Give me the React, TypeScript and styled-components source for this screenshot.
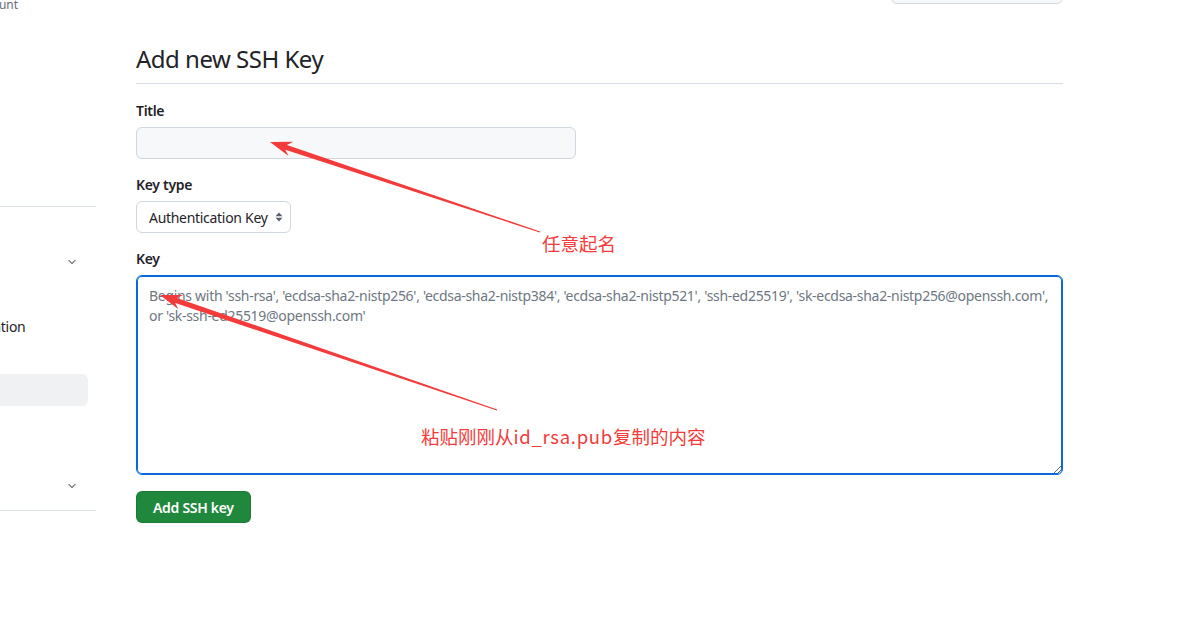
import React from "react";
import styled, { createGlobalStyle } from "styled-components";

const GlobalStyle = createGlobalStyle`
  html, body { margin: 0; padding: 0; background: #ffffff; }
  body {
    font-family: "Noto Sans", "Liberation Sans", Arial, sans-serif;
    color: #1f2328;
    overflow: hidden;
    width: 1177px;
    height: 633px;
  }
  * { box-sizing: border-box; }
`;

const Viewport = styled.div`
  position: relative;
  width: 1177px;
  height: 633px;
  overflow: hidden;
`;

const Page = styled.div`
  display: flex;
  align-items: flex-start;
  margin-top: -28px;
`;

/* ---------- Sidebar ---------- */
const Sidebar = styled.aside`
  width: 96px;
  flex-shrink: 0;
  overflow: hidden;
`;

const SideInner = styled.div`
  width: 262px;
  margin-left: -166px;
`;

const SideHeader = styled.div`
  display: flex;
  align-items: flex-start;
  gap: 8px;
  padding: 4px 0 0 2px;
  height: 66px;
`;

const Avatar = styled.div`
  width: 48px;
  height: 48px;
  border-radius: 50%;
  background: #d0d7de;
`;

const HeaderText = styled.div`
  display: flex;
  flex-direction: column;
`;

const HeaderName = styled.div`
  font-size: 14px;
  font-weight: 600;
  line-height: 20px;
`;

const HeaderSub = styled.div`
  font-size: 12px;
  line-height: 18px;
  color: #656d76;
`;

const NavList = styled.ul`
  list-style: none;
  margin: 0;
  padding: 0;
`;

const NavItem = styled.li<{ $active?: boolean }>`
  display: flex;
  align-items: center;
  justify-content: space-between;
  height: 32px;
  margin-right: 8px;
  padding: 0 10px 0 8px;
  border-radius: 6px;
  font-size: 14px;
  letter-spacing: -0.3px;
  color: #1f2328;
  background: ${(p) => (p.$active ? "#eff1f3" : "transparent")};
  white-space: nowrap;
`;

const Divider = styled.div`
  height: 1px;
  background: #d8dee4;
  margin: 8px 0;
`;

const NavGroupTitle = styled.div`
  height: 24px;
  margin-bottom: 7px;
  padding-left: 8px;
  font-size: 12px;
  font-weight: 600;
  line-height: 24px;
  color: #656d76;
`;

const Chevron = () => (
  <svg width="12" height="12" viewBox="0 0 16 16" fill="#656d76">
    <path d="M12.78 5.22a.749.749 0 0 1 0 1.06l-4.25 4.25a.749.749 0 0 1-1.06 0L3.22 6.28a.749.749 0 1 1 1.06-1.06L8 8.939l3.72-3.719a.749.749 0 0 1 1.06 0Z" />
  </svg>
);

/* ---------- Main ---------- */
const Main = styled.main`
  margin-left: 40px;
  width: 927px;
  display: flex;
  flex-direction: column;
  letter-spacing: -0.3px;
`;

const TopBar = styled.div`
  display: flex;
  justify-content: flex-end;
`;

const GhostButton = styled.div`
  width: 172px;
  height: 32px;
  border: 1px solid #d0d7de;
  border-radius: 6px;
  background: #f6f8fa;
`;

const Heading = styled.h2`
  margin: 37px 0 0;
  padding-bottom: 6px;
  font-size: 24px;
  font-weight: 400;
  line-height: 36px;
  letter-spacing: -0.5px;
  color: #1f2328;
  border-bottom: 1px solid #d8dee4;
`;

const Form = styled.form`
  display: flex;
  flex-direction: column;
  margin-top: 17px;
`;

const Field = styled.div<{ $first?: boolean }>`
  display: flex;
  flex-direction: column;
  align-items: flex-start;
  margin-top: ${(p) => (p.$first ? 0 : 16)}px;
`;

const Label = styled.label`
  font-size: 14px;
  font-weight: 600;
  line-height: 20px;
  margin-bottom: 6px;
  color: #1f2328;
`;

const TextInput = styled.input`
  width: 440px;
  height: 32px;
  border: 1px solid #d0d7de;
  border-radius: 6px;
  background: #f6f8fa;
  padding: 0 12px;
  font: inherit;
  font-size: 14px;
  outline: none;
`;

const SelectBox = styled.div`
  width: 155px;
  height: 32px;
  display: flex;
  align-items: center;
  justify-content: space-between;
  padding: 0 6px 0 12px;
  border: 1px solid #d0d7de;
  border-radius: 6px;
  background: #ffffff;
  font-size: 14px;
  color: #1f2328;
  white-space: nowrap;
`;

const KeyArea = styled.textarea`
  width: 100%;
  height: 200px;
  border: 1px solid #0969da;
  box-shadow: inset 0 0 0 1px #0969da;
  border-radius: 6px;
  padding: 10px 12px 8px;
  font: inherit;
  font-size: 14px;
  line-height: 20px;
  letter-spacing: -0.3px;
  resize: vertical;
  outline: none;
  &::placeholder { color: #6e7781; }
`;

const PrimaryButton = styled.button`
  margin-top: 16px;
  align-self: flex-start;
  height: 32px;
  padding: 0 16px;
  border: 1px solid rgba(31, 35, 40, 0.15);
  border-radius: 6px;
  background: #1f883d;
  color: #ffffff;
  font: inherit;
  font-size: 14px;
  font-weight: 600;
  letter-spacing: -0.3px;
`;

/* ---------- Annotation overlay ---------- */
const Overlay = styled.svg`
  position: absolute;
  left: 0;
  top: 0;
  pointer-events: none;
`;

const Note = styled.div<{ $x: number; $y: number }>`
  position: absolute;
  left: ${(p) => p.$x}px;
  top: ${(p) => p.$y}px;
  font-family: "Noto Sans CJK SC", "Noto Sans", sans-serif;
  font-size: 18.5px;
  line-height: 24px;
  color: #f43b3b;
  white-space: nowrap;
`;

const NoteLatin = styled.span`
  letter-spacing: 0.7px;
`;

function arrowPoints(tx: number, ty: number, ex: number, ey: number) {
  const dx = ex - tx;
  const dy = ey - ty;
  const len = Math.hypot(dx, dy);
  const ux = dx / len;
  const uy = dy / len;
  const nx = -uy;
  const ny = ux;
  const L = 22;
  const hw = 7.5;
  const sw = 2.6;
  const tw = 0.5;
  const p = (x: number, y: number) => `${x.toFixed(1)},${y.toFixed(1)}`;
  return [
    p(tx, ty),
    p(tx + L * ux + hw * nx, ty + L * uy + hw * ny),
    p(tx + (L - 5) * ux + sw * nx, ty + (L - 5) * uy + sw * ny),
    p(ex + tw * nx, ey + tw * ny),
    p(ex - tw * nx, ey - tw * ny),
    p(tx + (L - 5) * ux - sw * nx, ty + (L - 5) * uy - sw * ny),
    p(tx + L * ux - hw * nx, ty + L * uy - hw * ny),
  ].join(" ");
}

export default function App() {
  const placeholder =
    "Begins with 'ssh-rsa', 'ecdsa-sha2-nistp256', 'ecdsa-sha2-nistp384', 'ecdsa-sha2-nistp521', 'ssh-ed25519', 'sk-ecdsa-sha2-nistp256@openssh.com', or 'sk-ssh-ed25519@openssh.com'";
  return (
    <Viewport>
      <GlobalStyle />
      <Page>
        <Sidebar>
          <SideInner>
            <SideHeader>
              <Avatar />
              <HeaderText>
                <HeaderName>user</HeaderName>
                <HeaderSub>Your personal account</HeaderSub>
              </HeaderText>
            </SideHeader>
            <NavList>
              <NavItem>Public profile</NavItem>
              <NavItem>Account</NavItem>
              <NavItem>Appearance</NavItem>
              <NavItem>Accessibility</NavItem>
              <NavItem>Notifications</NavItem>
            </NavList>
            <Divider />
            <NavGroupTitle>Access</NavGroupTitle>
            <NavList>
              <NavItem>
                Billing and plans
                <Chevron />
              </NavItem>
              <NavItem>Emails</NavItem>
              <NavItem>Password and authentication</NavItem>
              <NavItem>Sessions</NavItem>
              <NavItem $active>SSH and GPG keys</NavItem>
              <NavItem>Organizations</NavItem>
              <NavItem>Enterprises</NavItem>
              <NavItem>
                Moderation
                <Chevron />
              </NavItem>
            </NavList>
            <Divider />
          </SideInner>
        </Sidebar>

        <Main>
          <TopBar>
            <GhostButton />
          </TopBar>
          <Heading>Add new SSH Key</Heading>
          <Form onSubmit={(e) => e.preventDefault()}>
            <Field $first>
              <Label>Title</Label>
              <TextInput type="text" />
            </Field>
            <Field>
              <Label>Key type</Label>
              <SelectBox>
                <span>Authentication Key</span>
                <svg width="10" height="16" viewBox="0 0 10 16" fill="#57606a">
                  <path d="M5 3.5 L8.5 7.2 H1.5 Z" />
                  <path d="M5 12.5 L8.5 8.8 H1.5 Z" />
                </svg>
              </SelectBox>
            </Field>
            <Field>
              <Label>Key</Label>
              <KeyArea placeholder={placeholder} />
            </Field>
            <PrimaryButton type="submit">Add SSH key</PrimaryButton>
          </Form>
        </Main>
      </Page>

      <Overlay width="1177" height="633" viewBox="0 0 1177 633">
        <polygon points={arrowPoints(270, 142, 540, 232)} fill="#f43b3b" />
        <polygon points={arrowPoints(160, 295, 497, 410)} fill="#f43b3b" />
      </Overlay>
      <Note $x={542} $y={231}>任意起名</Note>
      <Note $x={421} $y={424}>
        粘贴刚刚从<NoteLatin>id_rsa.pub</NoteLatin>复制的内容
      </Note>
    </Viewport>
  );
}
